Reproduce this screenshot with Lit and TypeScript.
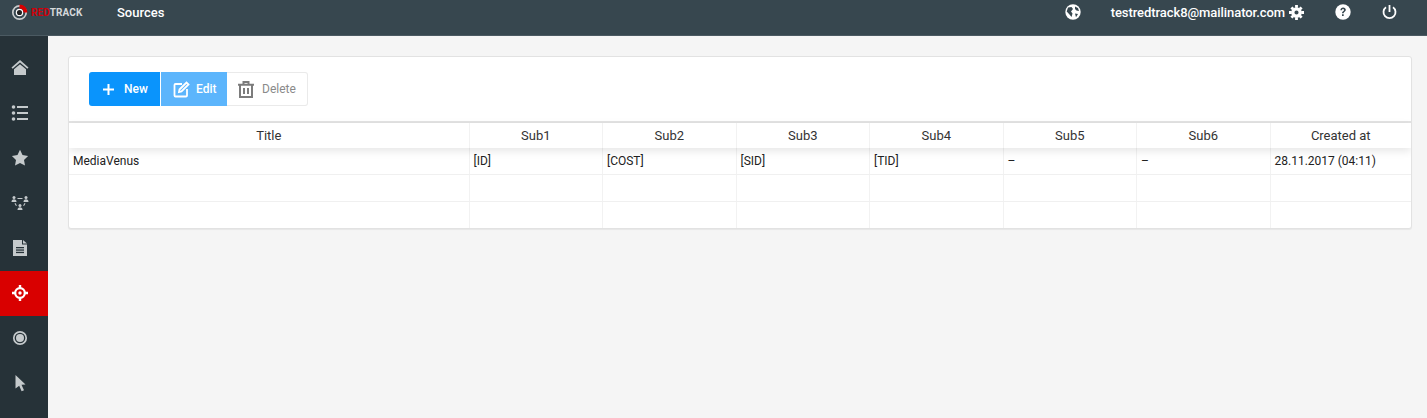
import { LitElement, html, css, svg } from "lit";
import { customElement } from "lit/decorators.js";

const cols = ["Title", "Sub1", "Sub2", "Sub3", "Sub4", "Sub5", "Sub6", "Created at"];
const row = ["MediaVenus", "[ID]", "[COST]", "[SID]", "[TID]", "–", "–", "28.11.2017 (04:11)"];

const navIcons = [
  svg`<path d="M11 3 2.500 10.500l1.200 1.200L11 5.500l7.300 6.200 1.200-1.200z"/><path d="M5 12.300 11 7.300l6 5V18H5z"/>`,
  svg`<circle cx="4.500" cy="5" r="1.800"/><circle cx="4.500" cy="11" r="1.800"/><circle cx="4.500" cy="17" r="1.800"/><rect x="8" y="4" width="11" height="2"/><rect x="8" y="10" width="11" height="2"/><rect x="8" y="16" width="11" height="2"/>`,
  svg`<path d="M11 2.800l2.500 5.300 5.600.8-4.100 4 1 5.700L11 16l-5 2.600 1-5.700-4.100-4 5.600-.8z"/>`,
  svg`<circle cx="5" cy="5.400" r="1.500"/><path d="M2.500 10c0-2 1-2.800 2.500-2.800S7.500 8 7.500 10z"/><circle cx="17" cy="5.400" r="1.500"/><path d="M14.500 10c0-2 1-2.800 2.500-2.800s2.500.8 2.500 2.800z"/><circle cx="11" cy="13.500" r="1.500"/><path d="M8.500 18c0-2 1-2.800 2.500-2.800s2.500.8 2.500 2.800z"/><rect x="8.500" y="6" width="5" height="1"/><path d="M5.500 11.500l.9-.5 1.500 2.600-.9.5zM16.500 11.500l-.9-.5-1.500 2.600.9.5z"/>`,
  svg`<path d="M4 3h9v4.500h5V19H4z"/><path d="M14 3l4 3.500h-4z"/><g fill="#263238"><rect x="7" y="10" width="8" height="1.300"/><rect x="7" y="12.400" width="8" height="1.300"/><rect x="7" y="14.800" width="8" height="1.300"/></g>`,
  svg`<circle cx="11" cy="11" r="4.800" fill="none" stroke="currentColor" stroke-width="2.200"/><circle cx="11" cy="11" r="1.700"/><path d="M9.800 3h2.400v4H9.800zM9.800 15h2.400v4H9.800zM3 9.800h4v2.400H3zM15 9.800h4v2.400h-4z"/>`,
  svg`<circle cx="11" cy="11" r="6.200" fill="none" stroke="currentColor" stroke-width="1.700"/><circle cx="11" cy="11" r="4"/>`,
  svg`<path d="M6.500 3 16.500 12.500l-4 .3 2.500 5.400-2.400 1-2.400-5.400-3.700 2.700z"/>`,
];

@customElement("app-root")
export class AppRoot extends LitElement {
  static styles = css`
    :host { display: block; width: 1427px; height: 418px; overflow: hidden; font-family: Roboto, "Helvetica Neue", Arial, sans-serif; background: #f5f5f5; }
    .top { height: 24px; background: #37474f; border-bottom: 1px solid #4b5a62; display: flex; align-items: center; color: #fff; padding-bottom: 11px; }
    .logo { width: 117px; padding-left: 11px; box-sizing: border-box; display: flex; align-items: center; font-size: 10px; font-weight: 700; letter-spacing: 0.15px; flex: none; gap: 3px; }
    .logo .red { color: #d0000a; }
    .logo .wh { color: #d5d9db; }
    .title { font-size: 13px; font-weight: 500; }
    .right { margin-left: auto; display: flex; align-items: center; }
    .email { font-size: 13px; font-weight: 500; letter-spacing: -0.07px; margin-left: 30px; }
    .gear { margin-left: 4px; }
    .help { margin-left: 31px; }
    .power { margin-left: 31px; margin-right: 30px; }
    .body { display: flex; height: 382px; }
    .side { width: 48px; background: #263238; flex: none; padding-top: 10px; box-sizing: border-box; }
    .nav { height: 45px; box-sizing: border-box; padding: 0 0 2px 9px; display: flex; align-items: center; color: #c5cacc; }
    .nav.on { background: #d90000; color: #fff; }
    .nav svg { display: block; fill: currentColor; }
    .main { flex: 1; padding: 20px 15px 0 20px; }
    .card { background: #fff; border: 1px solid #e2e2e2; border-radius: 3px; box-shadow: 0 1px 1px rgba(0,0,0,.06); overflow: hidden; }
    .bar { padding: 15px 20px 0; box-sizing: border-box; display: flex; border-bottom: 2px solid #e3e3e3; height: 66px; }
    .btn { height: 34px; display: flex; align-items: center; font-size: 12px; font-weight: 500; box-sizing: border-box; color: #fff; }
    .new { width: 71px; background: #0a94fc; border-radius: 3px 0 0 3px; padding-left: 14px; gap: 10px; margin-right: 1px; }
    .edit { width: 66px; background: #5cb5fc; padding-left: 12px; gap: 6px; }
    .del { width: 81px; background: #fff; border: 1px solid #eaeaea; border-left: 0; border-radius: 0 3px 3px 0; color: #8a8a8a; font-weight: 400; padding-left: 11px; gap: 8px; }
    .row { display: grid; grid-template-columns: 400.5px repeat(6, 133.5px) 1fr; font-size: 12px; color: #222; height: 27px; box-sizing: border-box; border-bottom: 1px solid #f0f0f0; }
    .row.last { border-bottom: 0; height: 26px; }
    .row.head { height: 25px; border-bottom: 0; font-size: 13px; color: #333; position: relative; box-shadow: 0 3px 8px rgba(0,0,0,.1); }
    .cell { border-right: 1px solid #f2f2f2; padding: 0 4px; display: flex; align-items: center; }
    .cell:last-child { border-right: 0; }
    .head .cell { justify-content: center; }
  `;

  render() {
    return html`
      <div class="top">
        <div class="logo">
          <svg width="17" height="17" viewBox="0 0 16 16">
            <circle cx="8" cy="8" r="6.300" fill="none" stroke="#c9cccd" stroke-width="1.600"/>
            <circle cx="8" cy="8" r="3.500" fill="#fff"/><circle cx="8" cy="8" r="2.400" fill="#222"/>
            <path d="M8 .5A7.500 7.500 0 0 1 15.500 8H11.800A3.800 3.800 0 0 0 8 4.200z" fill="#d90000"/>
          </svg>
          <span><span class="red">RED</span><span class="wh">TRACK</span></span>
        </div>
        <div class="title">Sources</div>
        <div class="right">
          <svg width="16" height="16" viewBox="0 0 16 16"><circle cx="8" cy="8" r="7.700" fill="#fff"/><path d="M3 3.500 6.500 3 8 5 6 7.500 7.500 9.500 6.500 13 4.500 10.500 1.700 7.500zM10 2.500l3 1.500 1 3-2.500-.5L10 5zM10 9.500l3 .5-2 3.300z" fill="#37474f"/></svg>
          <span class="email">testredtrack8@mailinator.com</span>
          <svg class="gear" width="15" height="15" viewBox="0 0 16 16" fill="#fff"><circle cx="8" cy="8" r="3.900" fill="none" stroke="#fff" stroke-width="3.400"/><path d="M6.500 0h3v3h-3zM6.500 13h3v3h-3zM0 6.500h3v3H0zM13 6.500h3v3h-3zM1.500 3.600l2.100-2.100 2 2-2.100 2.100zM10.400 12.500l2.100-2.100 2 2-2.100 2.100zM12.400 1.500l2.100 2.100-2 2-2.100-2.100zM3.500 10.400l2.100 2.100-2 2-2.100-2.100z"/></svg>
          <svg class="help" width="16" height="16" viewBox="0 0 16 16"><circle cx="8" cy="8" r="7.700" fill="#fff"/><path d="M5.400 6.200C5.500 4.500 6.600 3.500 8.100 3.500c1.600 0 2.700 1 2.700 2.300 0 1.200-.7 1.700-1.400 2.200-.5.400-.7.700-.7 1.300H7c0-1.100.4-1.600 1.100-2.100.6-.5.900-.8.900-1.300S8.600 5.100 8 5.100c-.6 0-1 .4-1.100 1.100zM7 10.300h1.700V12H7z" fill="#37474f"/></svg>
          <svg class="power" width="15" height="16" viewBox="0 0 15 16" fill="none" stroke="#fff" stroke-width="1.800"><path d="M4 3.300a6 6 0 1 0 7 0" /><path d="M7.500 1v7"/></svg>
        </div>
      </div>
      <div class="body">
        <div class="side">
          ${navIcons.map((p, i) => html`<div class="nav ${i === 5 ? "on" : ""}"><svg width="22" height="22" viewBox="0 0 22 22">${p}</svg></div>`)}
        </div>
        <div class="main">
          <div class="card">
            <div class="bar">
              <div class="btn new"><svg width="11" height="11" viewBox="0 0 11 11" fill="#fff"><path d="M4.500 0h2v11h-2z"/><path d="M0 4.500h11v2H0z"/></svg><span>New</span></div>
              <div class="btn edit"><svg width="17" height="17" viewBox="0 0 17 17" fill="none" stroke="#fff" stroke-width="1.800"><path d="M9 3H2.500a1 1 0 0 0-1 1v10.500a1 1 0 0 0 1 1H13a1 1 0 0 0 1-1V8"/><path d="M6.500 8.500 13.500 1.500l2 2-7 7-2.500.5z"/></svg><span>Edit</span></div>
              <div class="btn del"><svg width="16" height="17" viewBox="0 0 16 17" fill="none" stroke="#7c7c7c" stroke-width="2"><path d="M0 3.700h16M2 3.700V16h12V3.700M5.500 3.500V1h5v2.500M6 7v6M10 7v6"/></svg><span>Delete</span></div>
            </div>
            <div class="row head">${cols.map((c) => html`<div class="cell">${c}</div>`)}</div>
            <div class="row">${row.map((c) => html`<div class="cell">${c}</div>`)}</div>
            <div class="row">${row.map(() => html`<div class="cell"></div>`)}</div>
            <div class="row last">${row.map(() => html`<div class="cell"></div>`)}</div>
          </div>
        </div>
      </div>
    `;
  }
}
